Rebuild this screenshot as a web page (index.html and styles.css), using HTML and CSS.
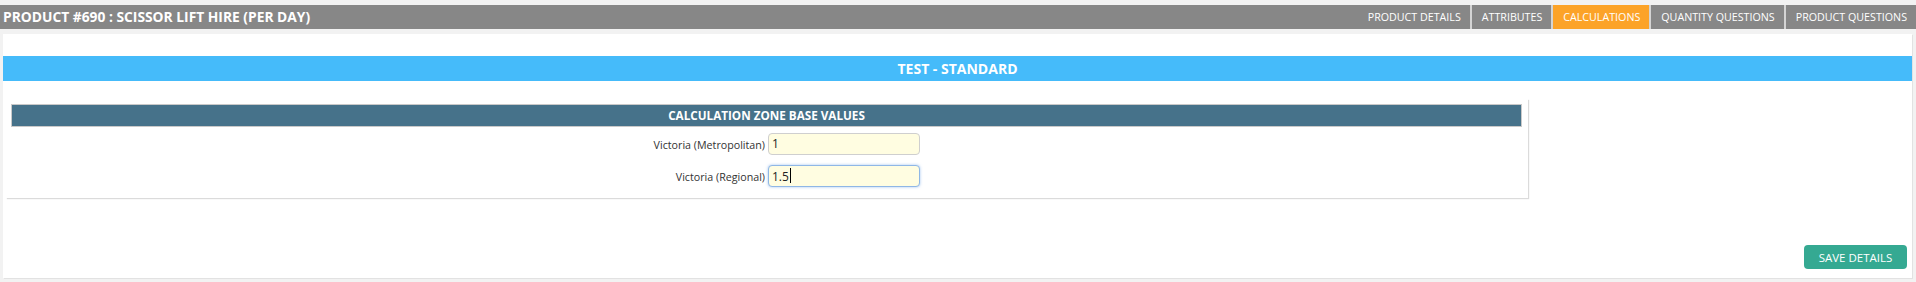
FILE: index.html
```html
<!DOCTYPE html>
<html lang="en">
<head>
    <meta charset="UTF-8">
    <meta name="viewport" content="width=device-width, initial-scale=1.0">
    <title>Product #690 - Calculations</title>
    <link rel="stylesheet" href="styles.css">
</head>
<body>
    <header class="topbar">
        <h1 class="title">PRODUCT #690 : SCISSOR LIFT HIRE (PER DAY)</h1>
        <nav class="tabs">
            <a href="#" class="tab">PRODUCT DETAILS</a>
            <a href="#" class="tab">ATTRIBUTES</a>
            <a href="#" class="tab active">CALCULATIONS</a>
            <a href="#" class="tab">QUANTITY QUESTIONS</a>
            <a href="#" class="tab">PRODUCT QUESTIONS</a>
        </nav>
    </header>

    <main class="panel">
        <div class="zone-bar">TEST - STANDARD</div>

        <section class="calc-box">
            <div class="calc-head">CALCULATION ZONE BASE VALUES</div>
            <form class="calc-form" action="#">
                <div class="row">
                    <label for="zone1">Victoria (Metropolitan)</label>
                    <div class="field">
                        <input type="text" id="zone1" name="zone1" value="1">
                    </div>
                </div>
                <div class="row">
                    <label for="zone2">Victoria (Regional)</label>
                    <div class="field">
                        <input type="text" id="zone2" name="zone2" value="1.5" class="focused">
                        <span class="caret"></span>
                    </div>
                </div>
            </form>
        </section>

        <div class="actions">
            <button type="button" class="btn-save">SAVE DETAILS</button>
        </div>
    </main>
</body>
</html>
```

FILE: styles.css
```css
body {
    margin: 0;
    padding: 0;
    background-color: #f2f2f2;
    font-family: "Open Sans", Arial, sans-serif;
    color: #333;
}

/* top bar with product name and tabs */
.topbar {
    margin-top: 5px;
    height: 24px;
    background-color: #878787;
    display: flex;
    justify-content: space-between;
    align-items: stretch;
}
.title {
    margin: 0;
    padding-left: 3px;
    font-size: 13.8px;
    font-weight: 700;
    line-height: 24px;
    color: #fff;
}
.tabs {
    display: flex;
}
.tab {
    padding: 0 9px 0 10px;
    font-size: 10.7px;
    line-height: 24px;
    color: #fff;
    text-decoration: none;
    border-left: 2px solid #d4d4d4;
}
.tab:first-child {
    border-left: none;
}
.tab.active {
    background-color: #fca328;
}

/* main white panel */
.panel {
    margin: 5px 4px 6px 3px;
    padding: 22px 0 9px;
    background-color: #fff;
    box-shadow: 1px 1px 0 #e2e2e2;
}
.zone-bar {
    height: 25px;
    line-height: 25px;
    background-color: #45bbfa;
    color: #fff;
    font-size: 14px;
    font-weight: 700;
    text-align: center;
}

.calc-box {
    width: 1511px;
    margin: 18px 0 0 3px;
    padding: 5px 6px 11px 5px;
    box-shadow: 1px 1px 1px rgba(0, 0, 0, 0.14);
}
.calc-head {
    height: 21px;
    line-height: 21px;
    background-color: #46728a;
    border: 1px solid #c9c9c9;
    color: #fff;
    font-size: 11.7px;
    font-weight: 700;
    text-align: center;
}
.calc-form {
    display: flex;
    flex-direction: column;
    gap: 9px;
    margin-top: 4px;
}
.row {
    display: grid;
    grid-template-columns: 1fr 1fr;
    column-gap: 3px;
    align-items: center;
}
.row label {
    text-align: right;
    font-size: 10.7px;
    color: #333;
    padding-top: 4px;
}
.field {
    position: relative;
    width: 152px;
}
.field input {
    box-sizing: border-box;
    width: 152px;
    height: 22px;
    padding: 0 3px;
    border: 1px solid #cfcfcf;
    border-radius: 4px;
    background-color: #fffde1;
    font-family: inherit;
    font-size: 12px;
    color: #222;
    outline: none;
}
.field input.focused {
    border-color: #8fb7e6;
    box-shadow: 0 0 3px rgba(102, 158, 230, 0.6);
}
.caret {
    position: absolute;
    left: 22px;
    top: 4px;
    width: 1px;
    height: 15px;
    background-color: #000;
}

.actions {
    display: flex;
    justify-content: flex-end;
    margin-top: 47px;
    padding-right: 5px;
}
.btn-save {
    width: 103px;
    height: 24px;
    border: none;
    border-radius: 4px;
    background-color: #35a992;
    color: #fff;
    font-family: inherit;
    font-size: 11.5px;
    cursor: pointer;
}
```
